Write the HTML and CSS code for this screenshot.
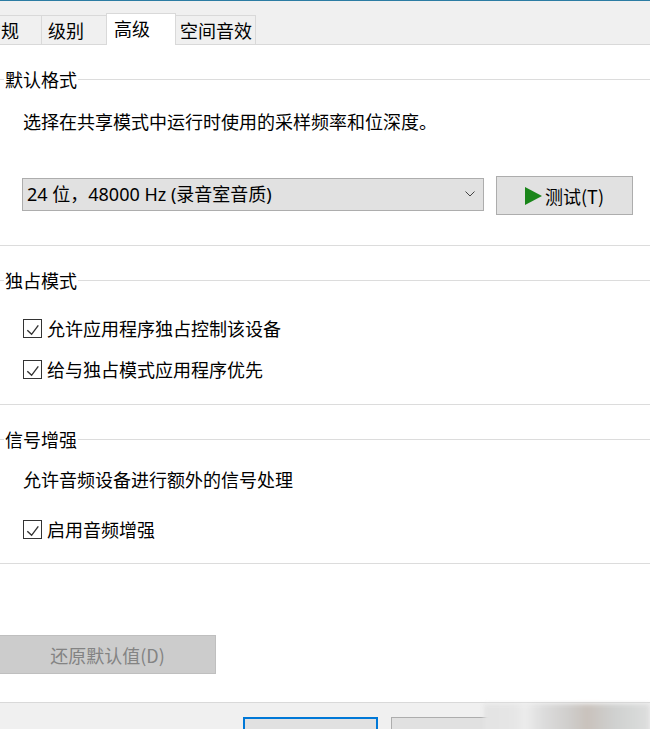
FILE: index.html
```html
<!DOCTYPE html>
<html lang="zh-CN">
<head>
<meta charset="utf-8">
<title>扬声器 属性</title>
<link rel="stylesheet" href="styles.css">
</head>
<body>
<div class="window">
  <div class="tabbar">
    <div class="tab tab-first">常规</div>
    <div class="tab">级别</div>
    <div class="tab tab-active">高级</div>
    <div class="tab tab-last">空间音效</div>
  </div>

  <div class="page">
    <section class="group">
      <div class="legend"><span class="legend-lead"></span><span class="legend-text">默认格式</span><span class="legend-rule"></span></div>
      <p class="desc desc-format">选择在共享模式中运行时使用的采样频率和位深度。</p>
      <div class="format-row">
        <div class="combo">
          <span class="combo-value">24 位，48000 Hz (录音室音质)</span>
          <svg class="combo-arrow" width="10" height="6" viewBox="0 0 10 6"><path d="M0.5 0.5 L5 5 L9.5 0.5" fill="none" stroke="#444" stroke-width="1"/></svg>
        </div>
        <button class="btn btn-test" type="button">
          <svg class="play" width="17" height="18" viewBox="0 0 17 18"><polygon points="0,0 17,9 0,18" fill="#1a861a"/></svg>
          <span>测试(T)</span>
        </button>
      </div>
    </section>

    <section class="group group-exclusive">
      <div class="legend"><span class="legend-lead"></span><span class="legend-text">独占模式</span><span class="legend-rule"></span></div>
      <label class="check-row check-first">
        <span class="box"><svg width="17" height="17" viewBox="0 0 17 17"><path d="M3.3 10.2 L7.6 14.3 L14.3 5.4" fill="none" stroke="#333" stroke-width="1.4"/></svg></span>
        <span>允许应用程序独占控制该设备</span>
      </label>
      <label class="check-row check-next">
        <span class="box"><svg width="17" height="17" viewBox="0 0 17 17"><path d="M3.3 10.2 L7.6 14.3 L14.3 5.4" fill="none" stroke="#333" stroke-width="1.4"/></svg></span>
        <span>给与独占模式应用程序优先</span>
      </label>
    </section>

    <section class="group group-enhance">
      <div class="legend"><span class="legend-lead"></span><span class="legend-text">信号增强</span><span class="legend-rule"></span></div>
      <p class="desc desc-enhance">允许音频设备进行额外的信号处理</p>
      <label class="check-row check-enhance">
        <span class="box"><svg width="17" height="17" viewBox="0 0 17 17"><path d="M3.3 10.2 L7.6 14.3 L14.3 5.4" fill="none" stroke="#333" stroke-width="1.4"/></svg></span>
        <span>启用音频增强</span>
      </label>
    </section>

    <button class="btn btn-restore" type="button" disabled>还原默认值(D)</button>
  </div>

  <div class="footer">
    <button class="btn btn-ok" type="button">确定</button>
    <button class="btn btn-cancel" type="button">取消</button>
    <div class="footer-haze"></div>
  </div>
</div>
</body>
</html>
```

FILE: styles.css
```css
html, body {
  margin: 0;
  padding: 0;
  background: #ffffff;
}

body {
  width: 650px;
  height: 729px;
  overflow: hidden;
  font-family: "Noto Sans CJK SC", "Noto Sans", sans-serif;
  font-size: 18px;
  color: #000000;
}

.window {
  display: flex;
  flex-direction: column;
  height: 729px;
}

/* ---- tab strip ---- */
.tabbar {
  display: flex;
  align-items: flex-end;
  height: 43px;
  border-top: 1px solid #2b7ca3;
  border-bottom: 1px solid #d9d9d9;
  background: #f0f0f0;
  flex: none;
}

.tab {
  box-sizing: border-box;
  flex: none;
  width: 65px;
  height: 29px;
  padding-left: 6px;
  border-top: 1px solid #d9d9d9;
  border-left: 1px solid #d9d9d9;
  background: #f0f0f0;
  line-height: 28px;
  white-space: nowrap;
}

.tab-first {
  margin-left: -24px;
}

.tab-active {
  position: relative;
  z-index: 1;
  width: 70px;
  height: 32px;
  margin-bottom: -1px;
  padding-left: 7px;
  border-right: 1px solid #d9d9d9;
  background: #ffffff;
  line-height: 29px;
}

.tab-last {
  width: 80px;
  padding-left: 4px;
  border-left: none;
  border-right: 1px solid #d9d9d9;
}

/* ---- page body ---- */
.page {
  flex: none;
  background: #ffffff;
}

.group {
  margin-top: 22px;
  border-bottom: 1px solid #dcdcdc;
}

.legend {
  display: flex;
  align-items: center;
  height: 25px;
}

.legend-lead {
  width: 4px;
  height: 1px;
  background: #dcdcdc;
}

.legend-text {
  padding: 0 1px;
  line-height: 25px;
}

.legend-rule {
  flex: 1;
  height: 1px;
  background: #dcdcdc;
}

.desc {
  margin: 0;
  padding-left: 23px;
  line-height: 24px;
}

.desc-format {
  margin-top: 17px;
}

.format-row {
  display: flex;
  align-items: flex-start;
  margin-top: 43px;
  padding-bottom: 30px;
}

.combo {
  box-sizing: border-box;
  display: flex;
  align-items: center;
  justify-content: space-between;
  width: 462px;
  height: 33px;
  margin-top: 2px;
  margin-left: 22px;
  padding: 0 8px 0 4px;
  border: 1px solid #adadad;
  background: #e1e1e1;
  line-height: 31px;
  white-space: nowrap;
}

/* Latin digits in the format name run a little wider than the CJK font's own */
.combo-value {
  font-family: "Noto Sans", "Noto Sans CJK SC", sans-serif;
}

.combo-arrow {
  display: block;
  margin-top: -2px;
}

.btn {
  box-sizing: border-box;
  margin: 0;
  padding: 0;
  border: 1px solid #adadad;
  background: #e1e1e1;
  font-family: inherit;
  font-size: 18px;
  color: #000000;
  height: 39px;
}

.btn-test {
  display: flex;
  align-items: center;
  justify-content: center;
  gap: 3px;
  width: 137px;
  margin-left: 12px;
}

.play {
  display: block;
}

.group-exclusive {
  padding-bottom: 23px;
}

.group-enhance {
  padding-bottom: 22px;
}

.check-row {
  display: flex;
  align-items: center;
  gap: 5px;
  height: 24px;
  padding-left: 23px;
  line-height: 24px;
}

.check-first {
  margin-top: 23px;
}

.check-next {
  margin-top: 17px;
}

.desc-enhance {
  margin-top: 15px;
}

.check-enhance {
  margin-top: 26px;
}

.box {
  box-sizing: border-box;
  display: flex;
  width: 19px;
  height: 19px;
  border: 1px solid #333333;
  background: #ffffff;
}

.box svg {
  display: block;
}

.btn-restore {
  display: block;
  width: 217px;
  margin-top: 71px;
  margin-left: -1px;
  border-color: #bfbfbf;
  background: #cccccc;
  color: #838383;
}

/* ---- dialog buttons ---- */
.footer {
  position: relative;
  flex: 1;
  display: flex;
  align-items: flex-start;
  margin-top: 28px;
  padding: 14px 0 0 243px;
  border-top: 1px solid #d9d9d9;
  background: #f0f0f0;
}

.btn-ok {
  width: 135px;
  border: 2px solid #0078d7;
}

.btn-cancel {
  width: 135px;
  margin-left: 13px;
}

.footer-haze {
  position: absolute;
  left: 484px;
  top: 1px;
  width: 166px;
  height: 30px;
  background: linear-gradient(to right, #e3e3e3 0%, #e6e6e6 18%, #ececec 25%, #dcdcdc 36%, #cfcdcb 52%, #c9c2bc 62%, #cfd0cf 78%, #d6d8d7 90%, #dedede 100%);
  filter: blur(2px);
}
```
